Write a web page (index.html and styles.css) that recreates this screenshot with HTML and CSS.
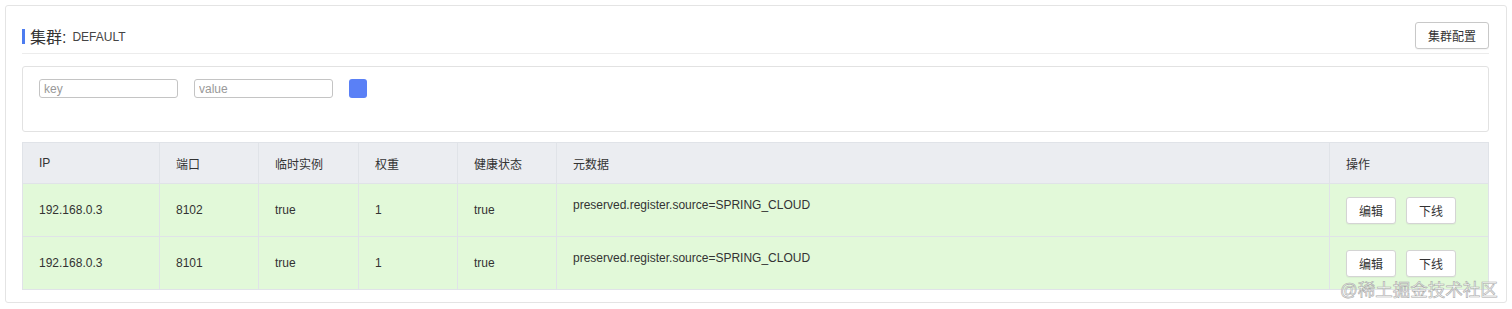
FILE: index.html
```html
<!DOCTYPE html>
<html lang="zh-CN">
<head>
    <meta charset="UTF-8">
    <meta name="viewport" content="width=device-width, initial-scale=1.0">
    <title>集群</title>
    <link rel="stylesheet" href="styles.css">
</head>
<body>
    <div class="card">
        <div class="card-header">
            <div class="title"><span class="bar"></span><span class="name">集群:</span><span class="cluster">DEFAULT</span></div>
            <button class="btn">集群配置</button>
        </div>
        <div class="filter">
            <input class="field" type="text" placeholder="key">
            <input class="field" type="text" placeholder="value">
            <button class="add"></button>
        </div>
        <table class="grid">
            <thead>
                <tr>
                    <th class="c-ip">IP</th>
                    <th class="c-port">端口</th>
                    <th class="c-eph">临时实例</th>
                    <th class="c-weight">权重</th>
                    <th class="c-health">健康状态</th>
                    <th>元数据</th>
                    <th class="c-ops">操作</th>
                </tr>
            </thead>
            <tbody>
                <tr>
                    <td>192.168.0.3</td>
                    <td>8102</td>
                    <td>true</td>
                    <td>1</td>
                    <td>true</td>
                    <td class="meta">preserved.register.source=SPRING_CLOUD</td>
                    <td><button class="btn small">编辑</button><button class="btn small">下线</button></td>
                </tr>
                <tr>
                    <td>192.168.0.3</td>
                    <td>8101</td>
                    <td>true</td>
                    <td>1</td>
                    <td>true</td>
                    <td class="meta">preserved.register.source=SPRING_CLOUD</td>
                    <td><button class="btn small">编辑</button><button class="btn small">下线</button></td>
                </tr>
            </tbody>
        </table>
    </div>
    <div class="watermark">@稀土掘金技术社区</div>
</body>
</html>
```

FILE: styles.css
```css
body {
    margin: 0;
    padding: 5px;
    font-family: "Liberation Sans", "Noto Sans CJK SC", sans-serif;
    font-size: 12px;
    color: #333;
    background: #fff;
}
.card {
    border: 1px solid #e4e4e4;
    border-radius: 3px;
    padding: 16px 17px 11px 16px;
    height: 269px;
}
.card-header {
    display: flex;
    justify-content: space-between;
    align-items: flex-start;
    padding-bottom: 4px;
    border-bottom: 1px solid #ececec;
}
.title {
    display: flex;
    align-items: center;
    margin-top: 2px;
}
.bar {
    width: 3px;
    height: 15px;
    background: #4d7cf0;
    margin-right: 5px;
}
.name {
    font-size: 16px;
    color: #333;
    margin-right: 6px;
}
.cluster {
    font-size: 12px;
    color: #444;
    padding-top: 2px;
}
.btn {
    font-family: inherit;
    font-size: 12px;
    color: #333;
    background: #fff;
    border: 1px solid #c8c8c8;
    border-radius: 3px;
    height: 27px;
    padding: 0 12px;
    box-shadow: 0 1px 1px rgba(0, 0, 0, 0.04);
}
.btn.small {
    width: 50px;
    padding: 0;
    margin-right: 10px;
    border-color: #d4d4d4;
    vertical-align: middle;
}
.filter {
    margin-top: 12px;
    border: 1px solid #e2e2e2;
    border-radius: 3px;
    padding: 12px 16px 0;
    display: flex;
    align-items: flex-start;
    gap: 16px;
    box-sizing: border-box;
    height: 66px;
}
.field {
    width: 139px;
    height: 19px;
    box-sizing: border-box;
    border: 1px solid #c4c4c4;
    border-radius: 3px;
    padding: 0 4px;
    font-family: inherit;
    font-size: 12px;
}
.field::placeholder {
    color: #999;
}
.add {
    width: 18px;
    height: 19px;
    border: none;
    border-radius: 3px;
    background: #5a80f6;
    padding: 0;
}
.grid {
    margin-top: 10px;
    width: 100%;
    border-collapse: collapse;
    table-layout: fixed;
}
.grid th, .grid td {
    border: 1px solid #e0e3e8;
    text-align: left;
    padding: 0 16px;
    font-weight: normal;
}
.grid th {
    background: #ebedf1;
    height: 40px;
    color: #333;
}
.grid tbody tr {
    height: 53px;
}
.grid td {
    background: #e2f9d9;
}
.grid td.meta {
    vertical-align: top;
    padding-top: 14px;
}
.c-ip { width: 104px; }
.c-port { width: 66px; }
.c-eph { width: 67px; }
.c-weight { width: 66px; }
.c-health { width: 66px; }
.c-ops { width: 126px; }
.watermark {
    position: absolute;
    left: 1340px;
    top: 276px;
    font-size: 17.5px;
    color: rgba(255, 255, 255, 0.75);
    -webkit-text-stroke: 0.6px #a9a9a9;
}
```
